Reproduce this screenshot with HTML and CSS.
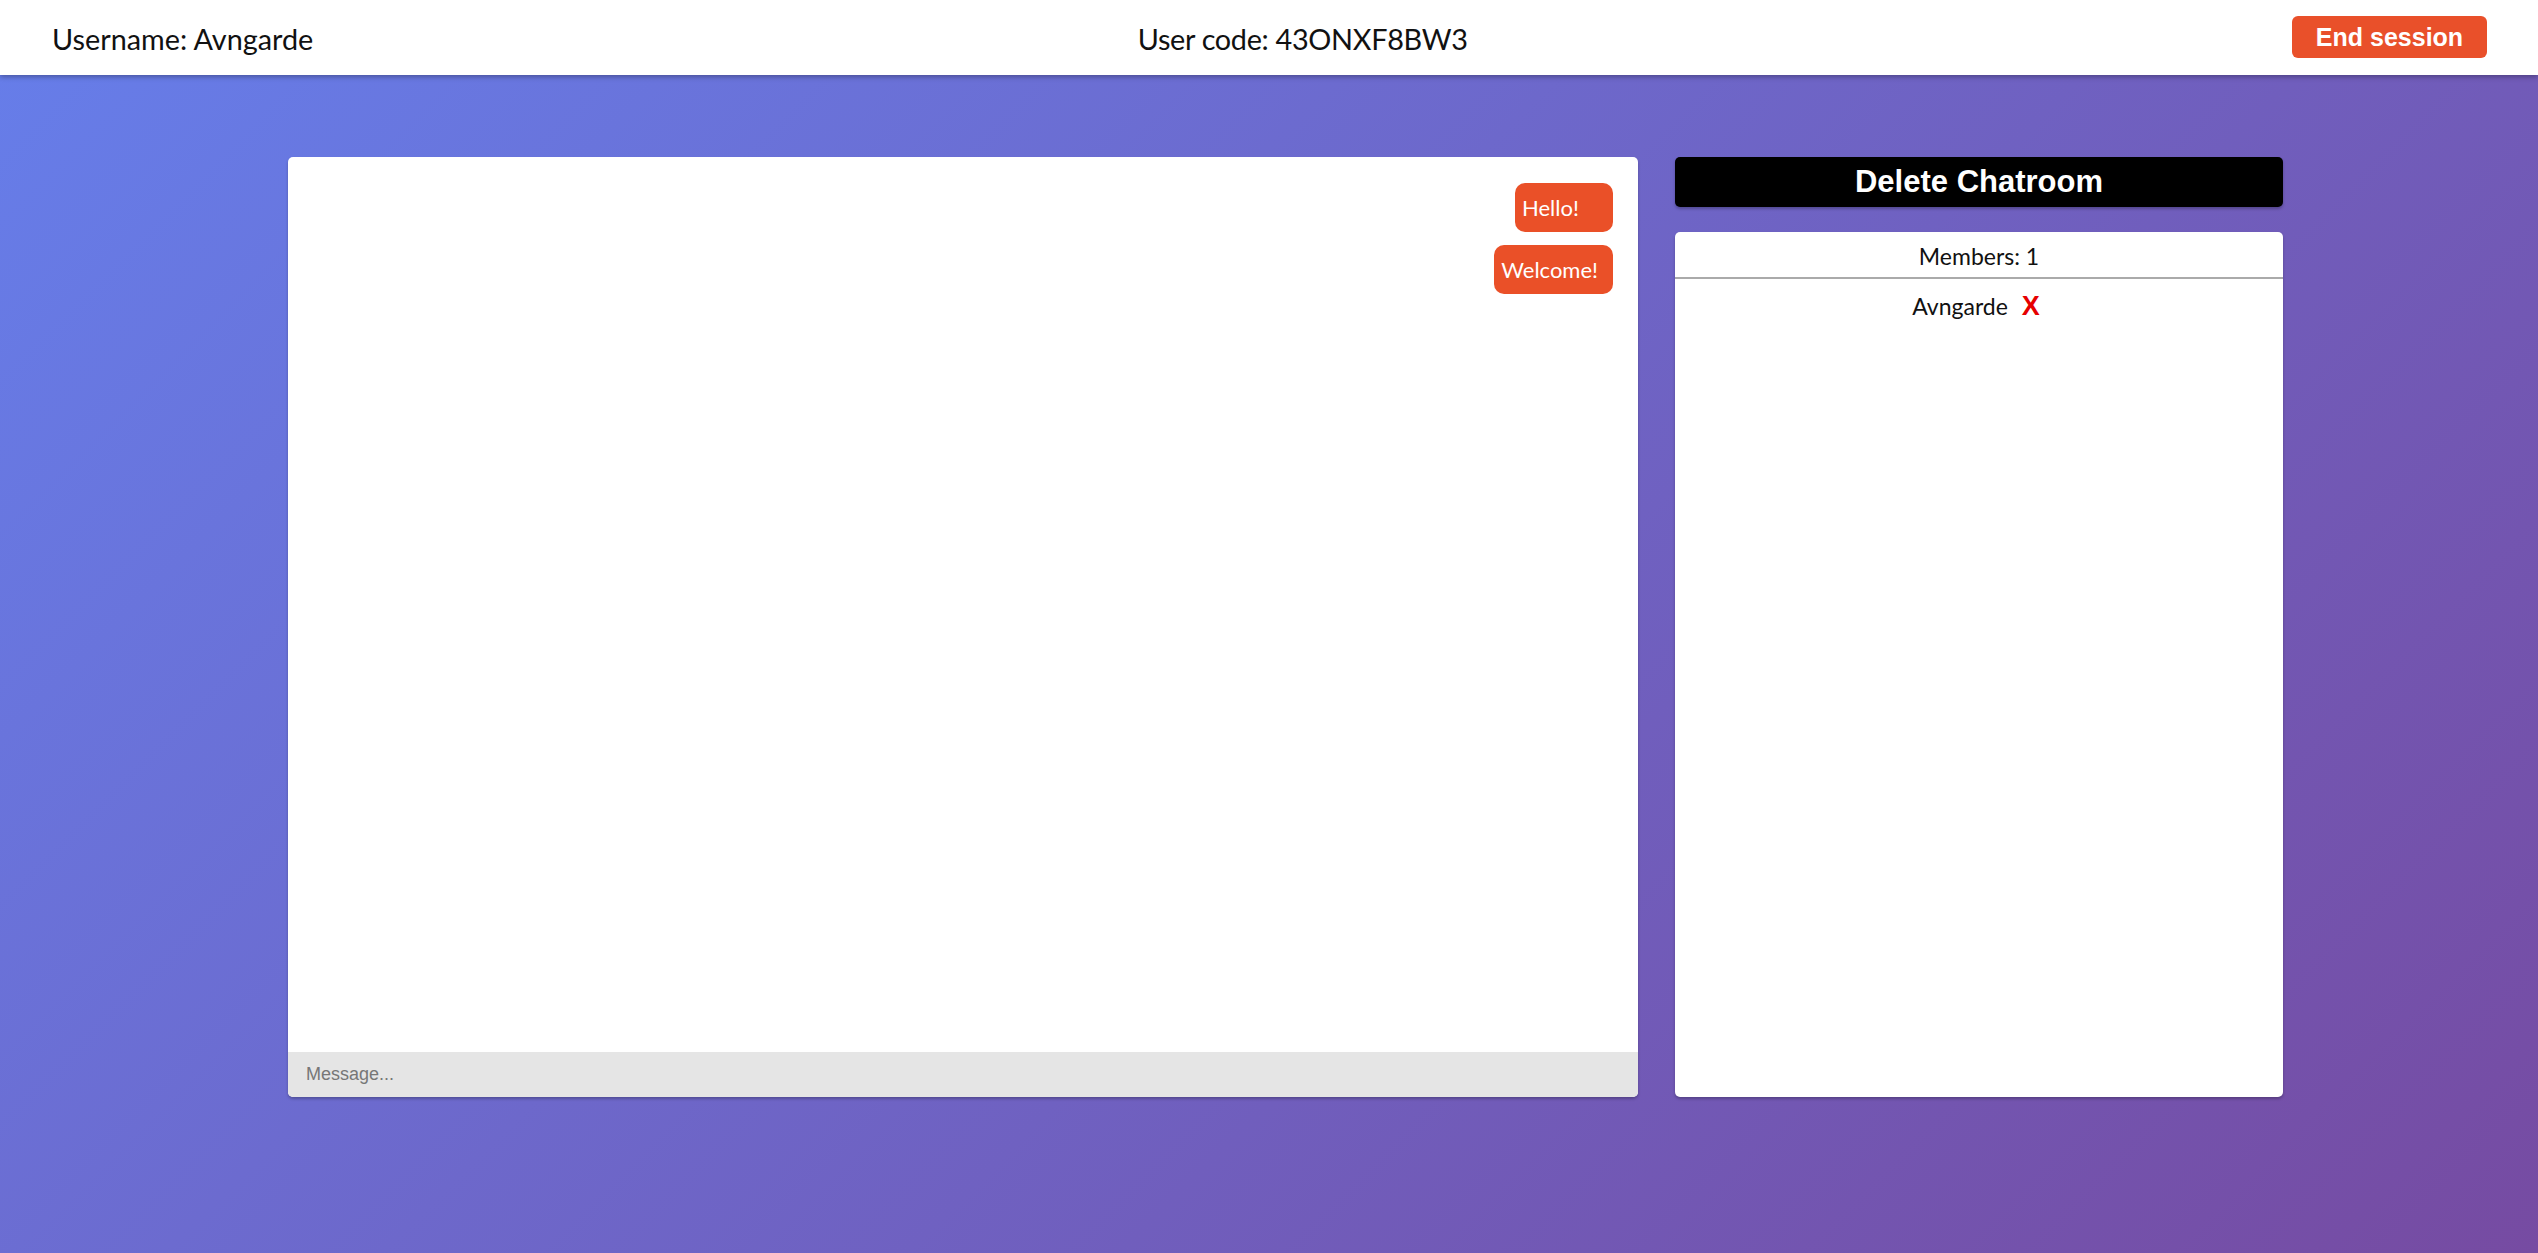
FILE: index.html
```html
<!DOCTYPE html>
<html lang="en">
<head>
<meta charset="utf-8">
<title>Chatroom</title>
<link rel="stylesheet" href="styles.css">
</head>
<body>
<header class="topbar">
  <div class="topbar-text">Username: Avngarde</div>
  <div class="topbar-text code">User code: 43ONXF8BW3</div>
  <button class="end-btn">End session</button>
</header>
<main class="layout">
  <section class="chat-card">
    <div class="messages">
      <div class="bubble bubble-hello">Hello!</div>
      <div class="bubble">Welcome!</div>
    </div>
    <input class="msg-input" type="text" placeholder="Message...">
  </section>
  <aside class="side">
    <button class="delete-btn">Delete Chatroom</button>
    <div class="members">
      <div class="members-head">Members: 1</div>
      <div class="member-row">
        <span class="member-name">Avngarde</span>
        <span class="kick">X</span>
      </div>
    </div>
  </aside>
</main>
</body>
</html>
```

FILE: styles.css
```css
* { box-sizing: border-box; }
html, body { height: 100%; }
body {
  margin: 0;
  min-height: 100vh;
  background: linear-gradient(135deg, #667eea 0%, #764ba2 100%);
  font-family: Lato, "Open Sans", sans-serif;
  color: #111;
}
.topbar {
  height: 75px;
  background: #fff;
  display: flex;
  align-items: center;
  justify-content: space-between;
  padding: 0 51px 0 52px;
  box-shadow: 0 2px 5px rgba(0,0,0,0.3);
  position: relative;
  z-index: 1;
}
.topbar-text {
  font-size: 28.8px;
  color: #111;
  margin-top: 2px;
}
.code { letter-spacing: -0.3px; }
.end-btn {
  height: 42px;
  width: 195px;
  margin-top: -1px;
  border: none;
  border-radius: 6px;
  background: #e9502a;
  color: #fff;
  font-family: "Liberation Sans", Arial, sans-serif;
  font-weight: bold;
  font-size: 25px;
  padding: 0;
}
.layout {
  display: flex;
  gap: 37px;
  padding: 82px 255px 0 288px;
}
.chat-card {
  flex: 0 0 1350px;
  height: 940px;
  background: #fff;
  border-radius: 5px;
  display: flex;
  flex-direction: column;
  overflow: hidden;
  box-shadow: 0 2px 3px rgba(0,0,0,0.25);
}
.messages {
  flex: 1;
  display: flex;
  flex-direction: column;
  align-items: flex-end;
  gap: 13px;
  padding: 26px 25px 0 0;
}
.bubble {
  height: 49px;
  display: flex;
  align-items: center;
  background: #ea5028;
  color: #fff;
  border-radius: 10px;
  padding: 0 15px 0 7px;
  font-size: 22px;
}
.bubble-hello { min-width: 98px; }
.msg-input {
  height: 45px;
  border: none;
  background: #e5e5e5;
  padding: 0 18px;
  font-family: "Liberation Sans", Arial, sans-serif;
  font-size: 18px;
  outline: none;
}
.msg-input::placeholder { color: #777; }
.side {
  flex: 1;
  height: 940px;
  display: flex;
  flex-direction: column;
  gap: 25px;
}
.delete-btn {
  height: 50px;
  border: none;
  border-radius: 5px;
  background: #000;
  color: #fff;
  font-family: "Liberation Sans", Arial, sans-serif;
  font-weight: bold;
  font-size: 31px;
  padding: 0;
  box-shadow: 0 2px 3px rgba(0,0,0,0.25);
}
.members {
  flex: 1;
  background: #fff;
  border-radius: 5px;
  box-shadow: 0 2px 3px rgba(0,0,0,0.25);
}
.members-head {
  height: 47px;
  border-bottom: 2px solid #aaa;
  display: flex;
  align-items: center;
  justify-content: center;
  font-size: 23px;
  padding-top: 2px;
}
.member-row {
  display: flex;
  justify-content: center;
  align-items: baseline;
  gap: 14px;
  padding-top: 12px;
  padding-right: 6px;
  font-size: 23px;
}
.kick {
  color: #e60000;
  font-family: "Liberation Sans", Arial, sans-serif;
  font-weight: bold;
  font-size: 27px;
}
```
